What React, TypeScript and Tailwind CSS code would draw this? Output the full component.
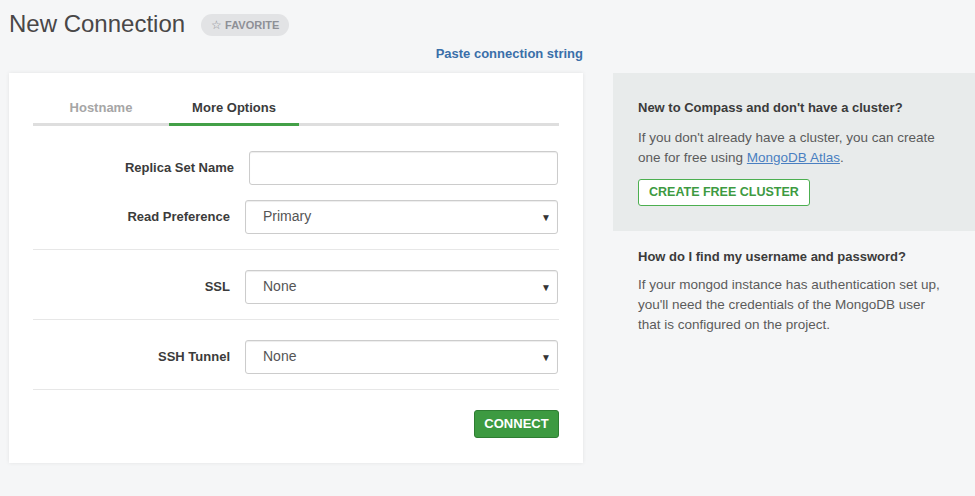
import { useState } from "react";

const font = { fontFamily: '"Liberation Sans", Arial, sans-serif' };

function SelectBox({ value }: { value: string }) {
  return (
    <div className="relative flex h-[34px] w-[313px] items-center rounded-[3px] border border-[#cccccc] bg-white pl-[17px] text-[14px] text-[#555555] shadow-[inset_0_1px_1px_rgba(0,0,0,0.075)]">
      {value}
      <span className="absolute right-[6px] top-[9px] text-[10px] text-[#333]">▼</span>
    </div>
  );
}

function Divider() {
  return <div className="h-px w-full bg-[#e7e7e7]" />;
}

export default function App() {
  const [tab, setTab] = useState(1);

  return (
    <div className="min-h-[496px] w-[975px] bg-[#f5f6f7] text-[#494747]" style={font}>
      <div className="flex">
        {/* left column */}
        <div className="ml-[9px] w-[574px]">
          <div className="flex h-[44px] items-center pt-[4px]">
            <h1 className="text-[24px] leading-none text-[#494747]">New Connection</h1>
            <div className="ml-[16px] mt-[2px] flex h-[22px] items-center gap-[3px] rounded-full bg-[#e2e3e5] px-[10px] text-[11px] font-bold text-[#8e9096]">
              <span className="text-[12px] font-normal">☆</span>FAVORITE
            </div>
          </div>
          <div className="flex h-[29px] items-start justify-end text-[13px] font-bold text-[#3a6fa9]">
            Paste connection string
          </div>

          {/* card */}
          <div className="h-[390px] bg-white px-[24px] shadow-[0_0_4px_rgba(0,0,0,0.08)]">
            <div className="flex border-b-[3px] border-[#dedede] pt-[25px]">
              {["Hostname", "More Options"].map((t, i) => (
                <button
                  key={t}
                  type="button"
                  onClick={() => setTab(i)}
                  className={
                    "-mb-[3px] border-b-[3px] pb-[5px] text-center text-[13px] font-bold " +
                    (i === 0 ? "w-[136px] " : "w-[130px] ") +
                    (tab === i ? "border-[#43a047] text-[#3b3b3b]" : "border-transparent text-[#a6a6a6]")
                  }
                >
                  {t}
                </button>
              ))}
            </div>

            <div className="pt-[25px]">
              <div className="flex items-center">
                <label className="w-[201px] text-right text-[13px] font-bold text-[#3b3b3b]">Replica Set Name</label>
                <input className="ml-[15px] h-[34px] w-[309px] rounded-[3px] border border-[#cccccc] shadow-[inset_0_1px_1px_rgba(0,0,0,0.075)] outline-none" />
              </div>
              <div className="mt-[15px] flex items-center">
                <label className="w-[197px] text-right text-[13px] font-bold text-[#3b3b3b]">Read Preference</label>
                <div className="ml-[15px]">
                  <SelectBox value="Primary" />
                </div>
              </div>
              <div className="mt-[15px]">
                <Divider />
              </div>
              <div className="mt-[20px] flex items-center">
                <label className="w-[197px] text-right text-[13px] font-bold text-[#3b3b3b]">SSL</label>
                <div className="ml-[15px]">
                  <SelectBox value="None" />
                </div>
              </div>
              <div className="mt-[15px]">
                <Divider />
              </div>
              <div className="mt-[20px] flex items-center">
                <label className="w-[197px] text-right text-[13px] font-bold text-[#3b3b3b]">SSH Tunnel</label>
                <div className="ml-[15px]">
                  <SelectBox value="None" />
                </div>
              </div>
              <div className="mt-[15px]">
                <Divider />
              </div>
              <div className="mt-[20px] flex justify-end">
                <button
                  type="button"
                  className="h-[28px] w-[85px] rounded-[3px] border border-[#2e7d32] bg-[#3d9a41] text-[13px] font-bold text-white"
                >
                  CONNECT
                </button>
              </div>
            </div>
          </div>
        </div>

        {/* right column */}
        <div className="ml-[30px] flex-1 pt-[73px]">
          <div className="h-[158px] bg-[#e8ebeb] pl-[25px] pt-[27px]">
            <h3 className="text-[13px] font-bold leading-[16px] text-[#3b3b3b]">New to Compass and don't have a cluster?</h3>
            <p className="mt-[12px] text-[13.5px] leading-[20px] text-[#5b5b5b]">
              If you don't already have a cluster, you can create
              <br />
              one for free using{" "}
              <a className="text-[#4a7fc1] underline" href="#">
                MongoDB Atlas
              </a>
              .
            </p>
            <button
              type="button"
              className="mt-[11px] h-[27px] rounded-[3px] border border-[#4caf50] bg-white px-[10px] text-[12.5px] font-bold text-[#3d9a41]"
            >
              CREATE FREE CLUSTER
            </button>
          </div>
          <div className="pl-[25px] pt-[18px]">
            <h3 className="text-[13px] font-bold leading-[16px] text-[#3b3b3b]">How do I find my username and password?</h3>
            <p className="mt-[10px] text-[13.5px] leading-[20px] text-[#5b5b5b]">
              If your mongod instance has authentication set up,
              <br />
              you'll need the credentials of the MongoDB user
              <br />
              that is configured on the project.
            </p>
          </div>
        </div>
      </div>
    </div>
  );
}
